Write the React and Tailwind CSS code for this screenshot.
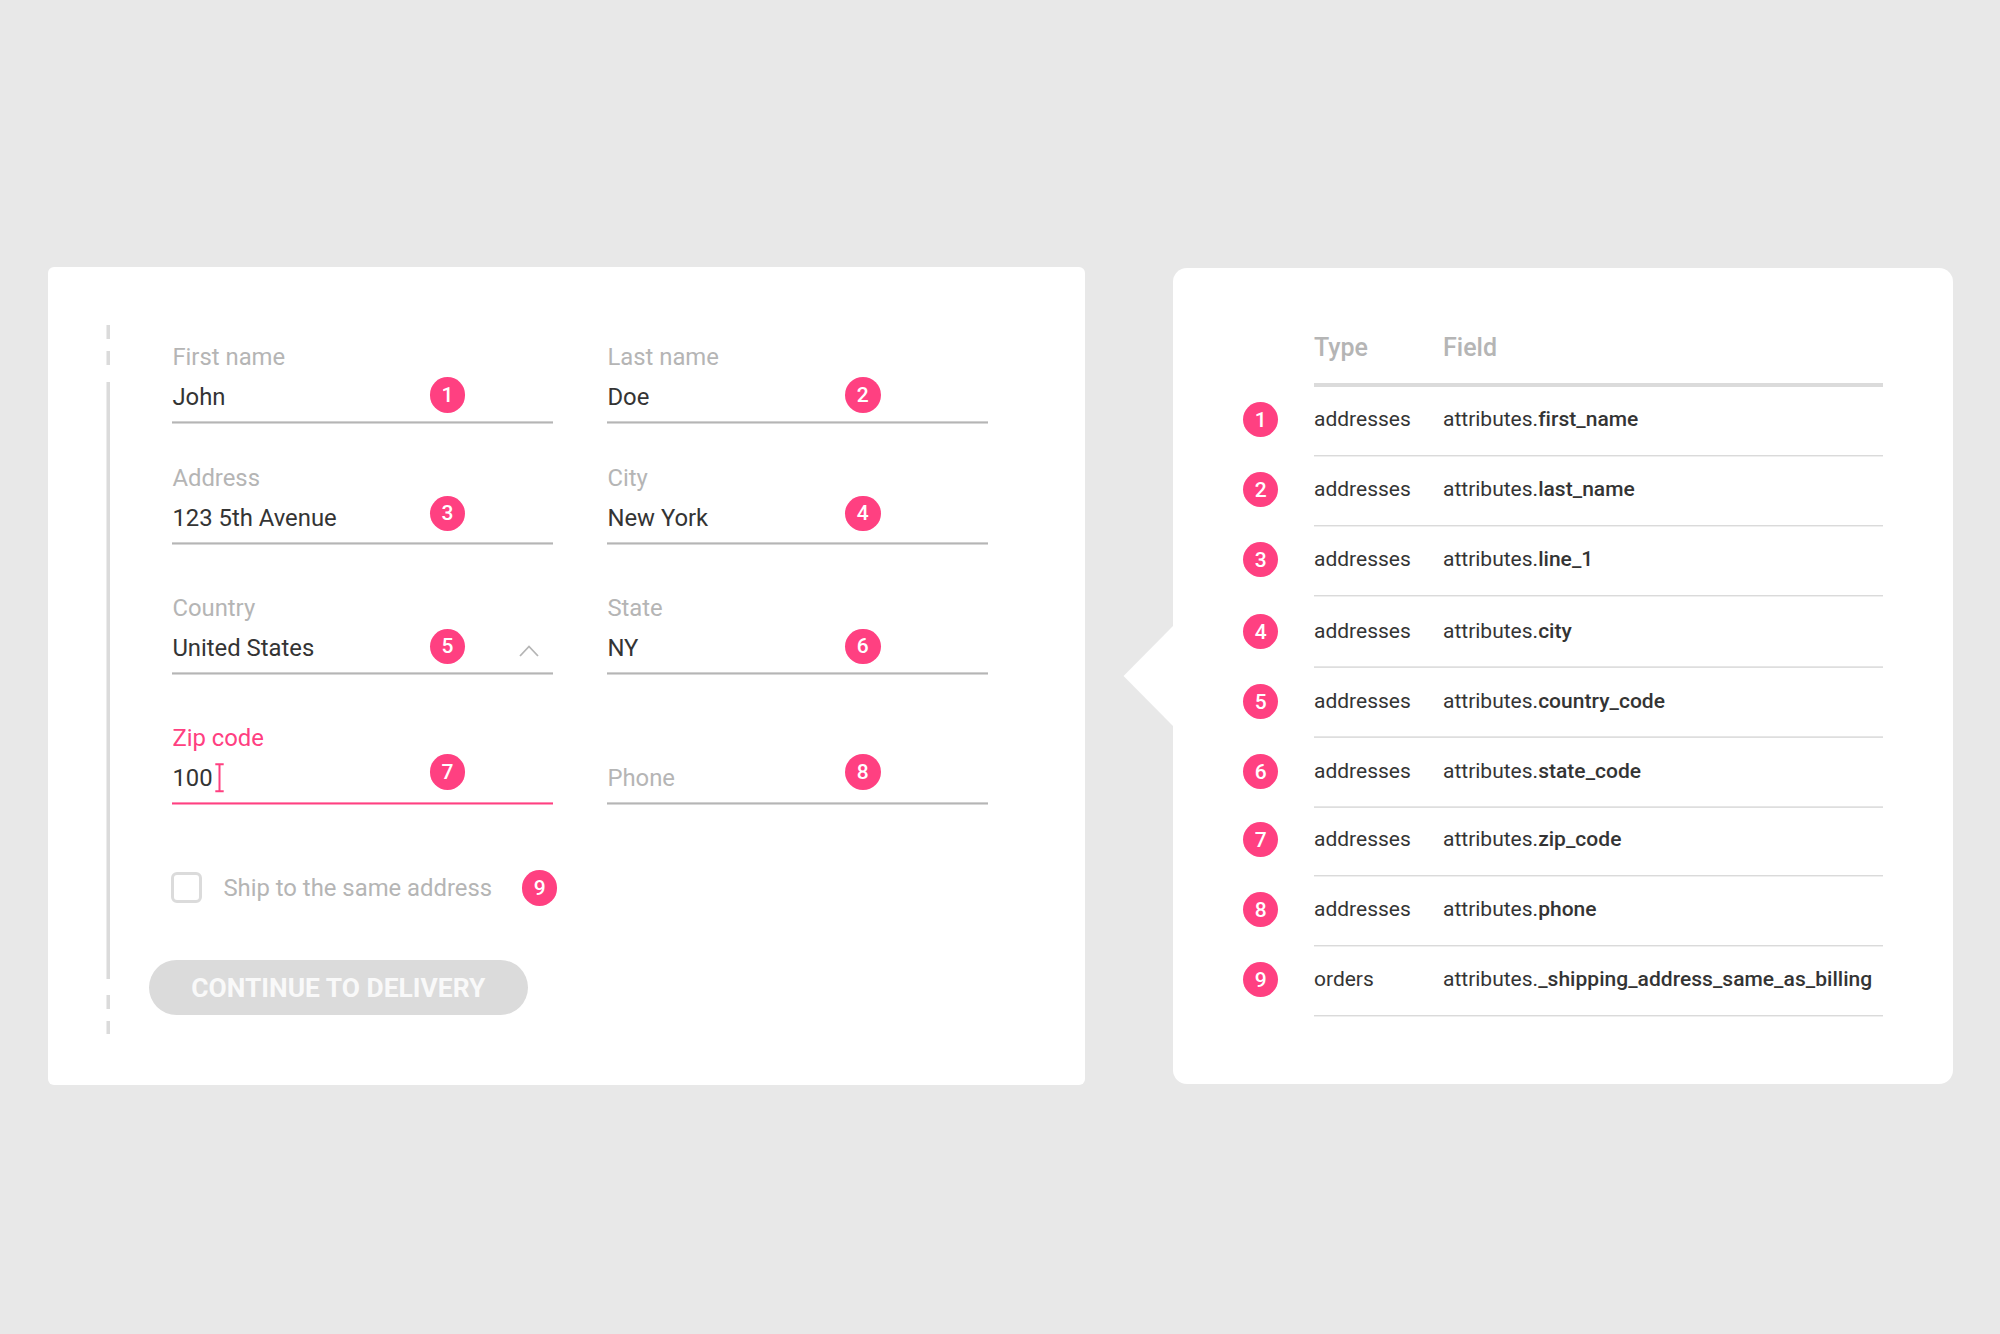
const BADGE = "flex h-[35.5px] w-[35.5px] items-center justify-center rounded-full bg-[#ff4081] pt-px text-[21px] font-medium leading-none text-white";

function Badge({ n, className = "" }) {
  return <span className={`${BADGE} ${className}`}>{n}</span>;
}

function Field({ label, value, active, placeholder, badge, badgeClass, children }) {
  return (
    <div className="relative w-[381px] text-[23.85px]">
      <div className={`h-10 pl-[0.4px] leading-10 ${active ? "text-[#ff4081]" : "text-[#b5b5b5]"}`}>{label}</div>
      <div className={`flex h-10 items-center pl-[0.4px] leading-10 ${placeholder ? "text-[#b5b5b5]" : "text-[#343434]"}`}>
        {value}
        {children}
      </div>
      <div
        className={`mt-1 h-[3px] ${
          active
            ? "bg-[linear-gradient(#ff8cb3_1px,#ff4081_1px,#ff4081_2px,#ff9fc0_2px)]"
            : "bg-[linear-gradient(#d0d0d0_1px,#b5b5b5_1px,#b5b5b5_2px,#d8d8d8_2px)]"
        }`}
      />
      <Badge n={badge} className={`absolute ${badgeClass}`} />
    </div>
  );
}

const SHARP_TOP = "bg-[linear-gradient(#dadada_1px,#efefef_1px)]";
const RAISED = "-mt-px mb-px bg-[linear-gradient(#e6e6e6_1px,#dedede_1px)]";

const rows = [
  ["addresses", "first_name", "h-[70px]", SHARP_TOP],
  ["addresses", "last_name", "h-[70px]", SHARP_TOP],
  ["addresses", "line_1", "h-[70px]", SHARP_TOP],
  ["addresses", "city", "h-[72px]", RAISED],
  ["addresses", "country_code", "h-[70px]", RAISED],
  ["addresses", "state_code", "h-[70px]", RAISED],
  ["addresses", "zip_code", "h-[68px]", SHARP_TOP],
  ["addresses", "phone", "h-[70px]", SHARP_TOP],
  ["orders", "_shipping_address_same_as_billing", "h-[70px]", SHARP_TOP],
];

function Timeline() {
  return (
    <div className="ml-[58px] flex w-[4px] flex-col pt-[58px] [&>*]:bg-[linear-gradient(90deg,#ececec_1px,#dbdbdb_1px)]">
      <i className="h-[14px]" />
      <i className="mt-3 h-[14px]" />
      <i className="mt-[17px] h-[597px]" />
      <i className="mt-4 h-[14px]" />
      <i className="mt-3 h-[13px]" />
    </div>
  );
}

export default function App() {
  return (
    <div className="flex h-[1334px] w-[2000px] items-start bg-[#e8e8e8] pl-12 pt-[267px] font-['Roboto',sans-serif]">
      <section className="flex h-[817.6px] w-[1037.4px] rounded-[6px] bg-white">
        <Timeline />
        <form className="ml-[38px] pt-[70px]">
          <div className="ml-6 grid grid-cols-[381px_381px] gap-x-[54px]">
            <Field label="First name" value="John" badge="1" badgeClass="left-[257.7px] top-[40px]" />
            <Field label="Last name" value="Doe" badge="2" badgeClass="left-[238px] top-[40px]" />
          </div>
          <div className="ml-6 mt-[34px] grid grid-cols-[381px_381px] gap-x-[54px]">
            <Field label="Address" value="123 5th Avenue" badge="3" badgeClass="left-[257.7px] top-[37.5px]" />
            <Field label="City" value="New York" badge="4" badgeClass="left-[238px] top-[37.5px]" />
          </div>
          <div className="ml-6 mt-[43px] grid grid-cols-[381px_381px] gap-x-[54px]">
            <Field label="Country" value="United States" badge="5" badgeClass="left-[257.7px] top-[40.5px]">
              <svg className="ml-auto mr-[14px] mt-[6px]" width="20" height="12" viewBox="0 0 20 12" fill="none" stroke="#b5b5b5" strokeWidth="1.8">
                <path d="M1 11 L10 1.5 L19 11" />
              </svg>
            </Field>
            <Field label="State" value="NY" badge="6" badgeClass="left-[238px] top-[40.5px]" />
          </div>
          <div className="ml-6 mt-[43px] grid grid-cols-[381px_381px] gap-x-[54px]">
            <Field label="Zip code" value="100" active badge="7" badgeClass="left-[257.7px] top-[36.3px]">
              <svg className="ml-[2.2px]" width="9" height="30" viewBox="0 0 9 30" fill="none" stroke="#ff4081" strokeWidth="2">
                <path d="M0.3 1.2H8.7M4.5 1.2V28.2M0.3 28.2H8.7" />
              </svg>
            </Field>
            <Field label="" value="Phone" placeholder badge="8" badgeClass="left-[238px] top-[36.3px]" />
          </div>
          <div className="ml-[23px] mt-[65px] flex h-9 items-center">
            <span className="mb-px h-[31px] w-[31px] rounded-[6px] border-[3px] border-[#dbdbdb]" />
            <span className="ml-[21.4px] text-[23.85px] leading-9 text-[#b5b5b5]">Ship to the same address</span>
            <Badge n="9" className="ml-[29.8px]" />
          </div>
          <button type="button" className="ml-[0.6px] mt-[54px] flex h-[55px] w-[379.4px] items-center justify-center rounded-full bg-[#dbdbdb] pt-[2px] text-[26.4px] font-bold text-[#f9f9f9]">
            CONTINUE TO DELIVERY
          </button>
        </form>
      </section>

      <section className="relative ml-[87.6px] mt-px h-[816px] w-[780px] rounded-[14px] bg-white">
        <svg className="absolute left-[-50px] top-[358px]" width="51" height="100" viewBox="0 0 51 100" fill="#fff">
          <path d="M50 0V100L0.5 50Z" />
          <path d="M50 0H51V100H50Z" />
        </svg>
        <div className="ml-[141px] mt-[55px] grid h-[64px] w-[569px] grid-cols-[129px_1fr] border-b-4 border-[#dbdbdb] text-[25px] font-medium leading-[50px] text-[#b5b5b5]">
          <span>Type</span>
          <span>Field</span>
        </div>
        <div className="pl-[70px]">
          {rows.map(([type, field, height, line], i) => (
            <div key={field} className={`flex items-end ${height}`}>
              <Badge n={i + 1} className="mb-[19.7px]" />
              <div className="ml-[35.5px] flex w-[569px] flex-col">
                <div className="grid h-[54px] grid-cols-[129px_1fr] text-[21px] leading-[36px] text-[#343434]">
                  <span>{type}</span>
                  <span className="whitespace-nowrap">
                    attributes.<b className="font-medium tracking-[0.03px]">{field}</b>
                  </span>
                </div>
                <div className={`h-[2px] ${line}`} />
              </div>
            </div>
          ))}
        </div>
      </section>
    </div>
  );
}
